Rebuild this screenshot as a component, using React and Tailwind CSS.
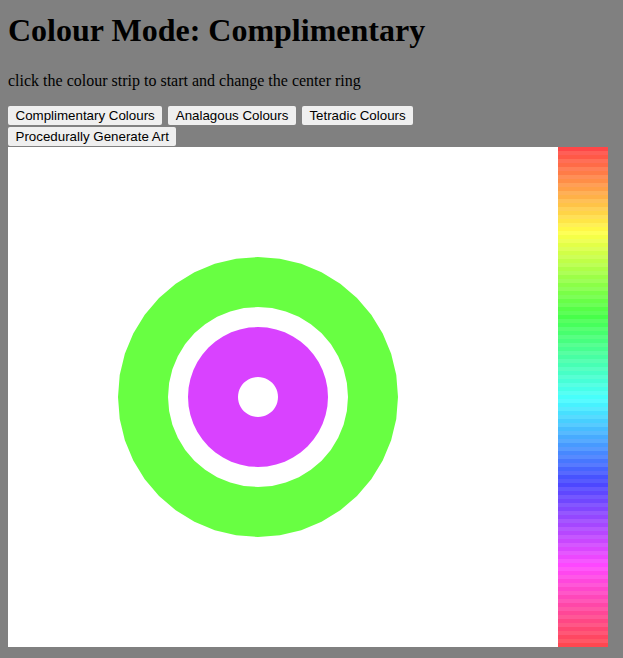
import React from "react";

// ring drawn as polygon outer + polygon inner (canvas style segments)
const ringPath = (cx, cy, rOut, rIn, sides) => {
  const poly = (r) => {
    let d = "";
    for (let i = 0; i < sides; i++) {
      const a = (i / sides) * Math.PI * 2;
      const x = cx + r * Math.cos(a);
      const y = cy + r * Math.sin(a);
      d += `${i === 0 ? "M" : "L"}${x.toFixed(2)} ${y.toFixed(2)} `;
    }
    return d + "Z ";
  };
  return poly(rOut) + poly(rIn);
};

const ColourStrip = () => {
  const stripes = [];
  const n = 125;
  for (let i = 0; i < n; i++) {
    const hue = (i / n) * 360;
    const light = i % 2 === 0 ? 64 : 67;
    stripes.push(
      <rect
        key={i}
        x="0"
        y={i * 4}
        width="50"
        height="4"
        fill={`hsl(${hue.toFixed(1)}, 100%, ${light}%)`}
      />
    );
  }
  return (
    <svg width="50" height="500" viewBox="0 0 50 500" className="block shrink-0">
      {stripes}
    </svg>
  );
};

const buttons = [
  "Complimentary Colours",
  "Analagous Colours",
  "Tetradic Colours",
  "Procedurally Generate Art",
];

export default function App() {
  return (
    <div className="min-h-screen bg-[#808080] text-black px-[8px] pb-[8px]">
      <h1 className="pt-[12px] text-[32px] leading-[37px] font-bold font-['Liberation_Serif',serif]">
        Colour Mode: Complimentary
      </h1>
      <p className="mt-[23px] text-[16px] leading-[18px] font-['Liberation_Serif',serif]">
        click the colour strip to start and change the center ring
      </p>

      <div className="mt-[16px] flex flex-wrap gap-x-[6px] gap-y-[2px] w-[420px]">
        {buttons.map((b) => (
          <button
            key={b}
            className="h-[19px] px-[7.5px] bg-[#efefef] rounded-[2px] text-[13.33px] leading-[19px] font-['Liberation_Sans',Arial,sans-serif] text-black"
          >
            {b}
          </button>
        ))}
      </div>

      <div className="mt-[1px] flex">
        <svg width="550" height="500" viewBox="0 0 550 500" className="block shrink-0 bg-white">
          <path d={ringPath(250, 250, 140, 90, 40)} fill="#68ff42" fillRule="evenodd" />
          <path d={ringPath(250, 250, 70, 20, 48)} fill="#d942ff" fillRule="evenodd" />
        </svg>
        <ColourStrip />
      </div>
    </div>
  );
}
